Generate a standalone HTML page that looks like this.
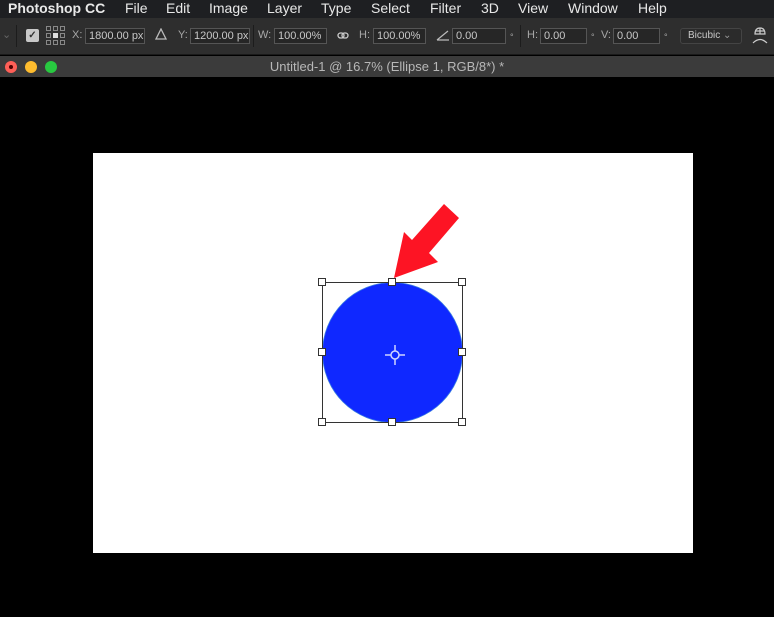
<!DOCTYPE html>
<html><head><meta charset="utf-8"><style>
*{margin:0;padding:0;box-sizing:border-box}
body{width:774px;height:617px;background:#000;position:relative;overflow:hidden;font-family:"Liberation Sans",sans-serif}
.menu{position:absolute;left:0;top:0;width:774px;height:18px;background:#1e1f22;color:#e8e8e8;font-size:14px;line-height:16px}
.menu span{position:absolute;top:0}
.tool{position:absolute;left:0;top:18px;width:774px;height:37px;background:#2e2e2e;border-bottom:1px solid #1a1a1a;color:#a8a8a8;font-size:11px}
.tool .t{position:absolute;top:11px}
.box{position:absolute;top:10px;height:16px;border:1px solid #555;background:#262626;color:#c8c8c8;font-size:11px;line-height:14px;padding-left:3px}
.title{position:absolute;left:0;top:56px;width:774px;height:21px;background:#3b3b3b;color:#b8b8b8;font-size:13px;line-height:21px;text-align:center}
.dot{position:absolute;top:5px;width:12px;height:12px;border-radius:50%}
.doc{position:absolute;left:93px;top:153px;width:600px;height:400px;background:#fff}
</style></head><body>
<div class="menu">
<span style="left:8px;font-weight:bold">Photoshop CC</span>
<span style="left:125px">File</span>
<span style="left:166px">Edit</span>
<span style="left:209px">Image</span>
<span style="left:267px">Layer</span>
<span style="left:321px">Type</span>
<span style="left:371px">Select</span>
<span style="left:430px">Filter</span>
<span style="left:481px">3D</span>
<span style="left:518px">View</span>
<span style="left:568px">Window</span>
<span style="left:638px">Help</span>
</div>
<div class="tool">
<span class="t" style="left:2px;top:10px;color:#666">⌄</span>
<div style="position:absolute;left:16px;top:7px;width:1px;height:22px;background:#1c1c1c"></div>
<div style="position:absolute;left:26px;top:11px;width:13px;height:13px;background:#c8c8c8;border-radius:2px;color:#333;font-size:10px;text-align:center;line-height:13px;font-weight:bold">✓</div>
<svg style="position:absolute;left:46px;top:8px" width="20" height="20"><g fill="none" stroke="#888" stroke-width="1"><rect x="0.5" y="0.5" width="4" height="4"/><rect x="7.5" y="0.5" width="4" height="4"/><rect x="14.5" y="0.5" width="4" height="4"/><rect x="0.5" y="7.5" width="4" height="4"/><rect x="14.5" y="7.5" width="4" height="4"/><rect x="0.5" y="14.5" width="4" height="4"/><rect x="7.5" y="14.5" width="4" height="4"/><rect x="14.5" y="14.5" width="4" height="4"/></g><rect x="7" y="7" width="5" height="5" fill="#ddd"/></svg>
<span class="t" style="left:72px">X:</span><div class="box" style="left:85px;width:60px">1800.00 px</div>
<svg style="position:absolute;left:155px;top:10px" width="12" height="12"><path d="M6 1 L11 11 L1 11 Z" fill="none" stroke="#bbb" stroke-width="1.3"/></svg>
<span class="t" style="left:178px">Y:</span><div class="box" style="left:190px;width:60px">1200.00 px</div>
<div style="position:absolute;left:253px;top:7px;width:1px;height:22px;background:#1c1c1c"></div>
<span class="t" style="left:258px">W:</span><div class="box" style="left:274px;width:53px">100.00%</div>
<svg style="position:absolute;left:337px;top:13px" width="12" height="10"><g fill="none" stroke="#ccc" stroke-width="1.3"><rect x="1" y="2" width="6" height="5" rx="2.5"/><rect x="5" y="2" width="6" height="5" rx="2.5"/></g></svg>
<span class="t" style="left:359px">H:</span><div class="box" style="left:373px;width:53px">100.00%</div>
<svg style="position:absolute;left:436px;top:11px" width="14" height="12"><path d="M1 11 L13 11 M1 11 L12 2" fill="none" stroke="#bbb" stroke-width="1.2"/></svg>
<div class="box" style="left:452px;width:54px">0.00</div><span class="t" style="left:510px;top:14px;font-size:9px">°</span>
<div style="position:absolute;left:520px;top:7px;width:1px;height:22px;background:#1c1c1c"></div>
<span class="t" style="left:527px">H:</span><div class="box" style="left:540px;width:47px">0.00</div><span class="t" style="left:591px;top:14px;font-size:9px">°</span>
<span class="t" style="left:601px">V:</span><div class="box" style="left:613px;width:47px">0.00</div><span class="t" style="left:664px;top:14px;font-size:9px">°</span>
<div class="box" style="left:680px;width:62px;border-radius:3px;border-color:#444;background:#2b2b2b;padding-left:7px;font-size:10px">Bicubic <span style="color:#999">⌄</span></div>
<svg style="position:absolute;left:751px;top:8px" width="18" height="20"><g fill="none" stroke="#ccc" stroke-width="1.2"><path d="M4 8 Q4 2 9 2 Q14 2 14 8 Z M4 5 H14 M9 2 V8"/><path d="M2 17 Q9 10 16 17"/></g></svg>
</div>
<div class="title">Untitled-1 @ 16.7% (Ellipse 1, RGB/8*) *
<div class="dot" style="left:5px;background:#fe5f57"><div style="position:absolute;left:4px;top:4px;width:4px;height:4px;border-radius:50%;background:#4d0000"></div></div>
<div class="dot" style="left:25px;background:#febc2e"></div>
<div class="dot" style="left:45px;background:#28c840"></div>
</div>
<div class="doc"></div>
<svg style="position:absolute;left:0;top:0" width="774" height="617">
<circle cx="392.5" cy="352.5" r="70" fill="#0f28ff" stroke="#3a7fe0" stroke-width="0.8"/>
<rect x="322.5" y="282.5" width="140" height="140" fill="none" stroke="#333" stroke-width="1"/>
<g fill="none" stroke="#333" stroke-width="1">
<rect x="318.5" y="278.5" width="7" height="7" fill="#fff"/><rect x="458.5" y="278.5" width="7" height="7" fill="#fff"/>
<rect x="318.5" y="418.5" width="7" height="7" fill="#fff"/><rect x="458.5" y="418.5" width="7" height="7" fill="#fff"/>
<rect x="388.5" y="278.5" width="7" height="7" fill="#fff"/><rect x="388.5" y="418.5" width="7" height="7" fill="#fff"/>
<rect x="318.5" y="348.5" width="7" height="7" fill="#fff"/><rect x="458.5" y="348.5" width="7" height="7" fill="#fff"/>
</g>
<g stroke="#d0d4ff" stroke-width="1.5" fill="none"><circle cx="395" cy="355" r="4"/><path d="M385 355 H391 M399 355 H405 M395 345 V351 M395 359 V365"/></g>
<polygon points="394,278 404,232 412,240 444,204 459,218 429,253 438,262" fill="#fd1424"/>
</svg>
</body></html>
